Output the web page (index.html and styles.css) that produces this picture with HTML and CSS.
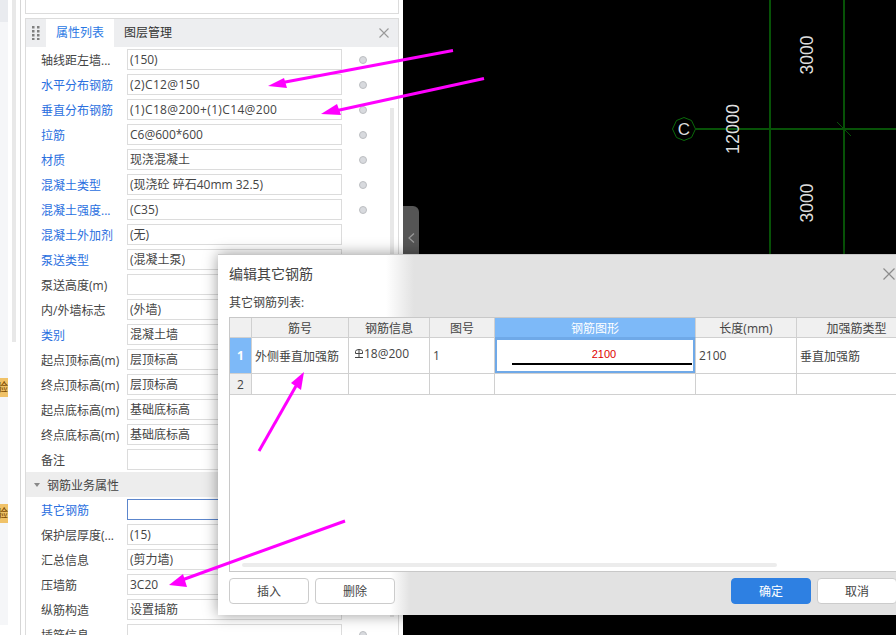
FILE: index.html
```html
<!DOCTYPE html>
<html lang="zh-CN">
<head>
  <meta charset="UTF-8" />
  <title>编辑其它钢筋</title>
  <link rel="stylesheet" href="styles.css">
</head>
<body>
  <div class="app">
    <div class="nav">
      <div class="nav-top"></div>
      <div class="nav-badge first">验</div>
      <div class="nav-badge second">验</div>
    </div>
    <div class="rail"><div class="rail-thumb"></div></div>
    <div class="rail-line"></div>

    <div class="panels">
      <div class="panel-top"></div>
      <div class="panel">
        <div class="tabs">
          <div class="grip">
            <svg width="8" height="14" viewBox="0 0 8 14"><path fill="#808080" d="M0 0h2.500v2.500H0zM5 0h2.500v2.500H5zM0 4h2.500v2.500H0zM5 4h2.500v2.500H5zM0 8h2.500v2.500H0zM5 8h2.500v2.500H5zM0 12h2.500v2H0zM5 12h2.500v2H5z"/></svg>
          </div>
          <div class="tab active">属性列表</div>
          <div class="tab">图层管理</div>
          <svg class="tab-close" width="10" height="10" viewBox="0 0 10 10"><path stroke="#999" stroke-width="1.100" d="M.5.500l9 9M9.500.500l-9 9"/></svg>
        </div>

        <div class="row"><span class="label">轴线距左墙...</span><span class="field">(150)</span><i class="dot"></i></div>
        <div class="row"><span class="label link">水平分布钢筋</span><span class="field spaced">(2)C12@150</span><i class="dot"></i></div>
        <div class="row"><span class="label link">垂直分布钢筋</span><span class="field spaced">(1)C18@200+(1)C14@200</span><i class="dot"></i></div>
        <div class="row"><span class="label link">拉筋</span><span class="field">C6@600*600</span><i class="dot"></i></div>
        <div class="row"><span class="label link">材质</span><span class="field">现浇混凝土</span><i class="dot"></i></div>
        <div class="row"><span class="label link">混凝土类型</span><span class="field">(现浇砼 碎石40mm 32.5)</span><i class="dot"></i></div>
        <div class="row"><span class="label link">混凝土强度...</span><span class="field">(C35)</span><i class="dot"></i></div>
        <div class="row"><span class="label link">混凝土外加剂</span><span class="field">(无)</span></div>
        <div class="row"><span class="label link">泵送类型</span><span class="field">(混凝土泵)</span></div>
        <div class="row"><span class="label">泵送高度(m)</span><span class="field"></span></div>
        <div class="row"><span class="label">内/外墙标志</span><span class="field">(外墙)</span></div>
        <div class="row"><span class="label link">类别</span><span class="field">混凝土墙</span></div>
        <div class="row"><span class="label">起点顶标高(m)</span><span class="field">层顶标高</span></div>
        <div class="row"><span class="label">终点顶标高(m)</span><span class="field">层顶标高</span></div>
        <div class="row"><span class="label">起点底标高(m)</span><span class="field">基础底标高</span></div>
        <div class="row"><span class="label">终点底标高(m)</span><span class="field">基础底标高</span></div>
        <div class="row"><span class="label">备注</span><span class="field"></span></div>

        <div class="section"><i class="caret"></i>钢筋业务属性</div>

        <div class="row"><span class="label link">其它钢筋</span><span class="field focus"></span></div>
        <div class="row"><span class="label">保护层厚度(...</span><span class="field">(15)</span></div>
        <div class="row"><span class="label">汇总信息</span><span class="field">(剪力墙)</span></div>
        <div class="row"><span class="label">压墙筋</span><span class="field">3C20</span></div>
        <div class="row"><span class="label">纵筋构造</span><span class="field">设置插筋</span></div>
        <div class="row"><span class="label">插筋信息</span><span class="field"></span><i class="dot"></i></div>

        <div class="panel-scroll"></div>
      </div>
    </div>

    <div class="canvas">
      <svg class="drawing" width="493" height="254" viewBox="403 0 493 254">
        <g stroke="#075207" fill="none">
          <path stroke-width="2" d="M770 0V254M844 0V254"/>
          <path stroke-width="2" d="M696 129H896"/>
          <path stroke-width="1" d="M837 122L851 136"/>
          <path stroke-width="1" stroke="#0a6a0a" d="M684 117.500l7.500 3 4 8.500-4 8.500-7.500 3-7.500-3-4-8.500 4-8.500z"/>
        </g>
        <g fill="#dedede" font-family="Liberation Sans, sans-serif" font-size="17.500">
          <text x="684" y="135" font-size="17" text-anchor="middle">C</text>
          <text transform="translate(739 129) rotate(-90)" text-anchor="middle" font-size="18">12000</text>
          <text transform="translate(813 55) rotate(-90)" text-anchor="middle">3000</text>
          <text transform="translate(813 203) rotate(-90)" text-anchor="middle">3000</text>
        </g>
      </svg>
      <div class="collapse">
        <svg width="7" height="10" viewBox="0 0 7 10"><path fill="none" stroke="#9a9a9a" stroke-width="1.200" d="M6 .500L1 5l5 4.500"/></svg>
      </div>
    </div>
  </div>

  <div class="dialog">
    <div class="dialog-head">
      <div class="dialog-title">编辑其它钢筋</div>
      <div class="dialog-sub">其它钢筋列表:</div>
      <svg class="dialog-close" width="12" height="12" viewBox="0 0 12 12"><path stroke="#8c8c8c" stroke-width="1.200" d="M.5.500l11 11M11.500.500l-11 11"/></svg>
    </div>

    <div class="grid-wrap">
      <table class="grid">
        <colgroup>
          <col class="c-index"><col class="c-name"><col class="c-info"><col class="c-fig"><col class="c-shape"><col class="c-len"><col class="c-type">
        </colgroup>
        <thead>
          <tr><th></th><th>筋号</th><th>钢筋信息</th><th>图号</th><th class="current">钢筋图形</th><th>长度(mm)</th><th>加强筋类型</th></tr>
        </thead>
        <tbody>
          <tr class="row-main">
            <td class="idx on">1</td>
            <td>外侧垂直加强筋</td>
            <td class="bar-info">
              <svg width="8" height="9" viewBox="0 0 8 9"><path fill="none" stroke="#444" d="M.5 4.500V2.500Q.5.500 4 .5T7.500 2.500V4.500H.5M4 0V8.500M0 8.500H8"/></svg>18@200
            </td>
            <td>1</td>
            <td class="shape-cell">
              <div class="shape-num">2100</div>
              <div class="shape-bar"></div>
            </td>
            <td>2100</td>
            <td>垂直加强筋</td>
          </tr>
          <tr class="row-empty">
            <td class="idx">2</td><td></td><td></td><td></td><td></td><td></td><td></td>
          </tr>
        </tbody>
      </table>
      <div class="grid-scroll"></div>
    </div>

    <div class="dialog-foot">
      <button class="btn">插入</button>
      <button class="btn">删除</button>
      <button class="btn primary push">确定</button>
      <button class="btn last">取消</button>
    </div>
  </div>

  <!-- annotation arrows on top of everything -->
  <svg class="marks" width="896" height="635" viewBox="0 0 896 635">
    <g stroke="#ff00ff" stroke-width="3" fill="#ff00ff">
      <path d="M453 50.500L280 83"/>
      <path d="M484 78.500L335 111"/>
      <path d="M345 521L182 580"/>
      <path d="M259 451L296 386"/>
    </g>
    <g fill="#ff00ff">
      <path d="M268 86L284 78 287 88z"/>
      <path d="M321 114L337 104 341 115z"/>
      <path d="M169 585L183 574 187 587z"/>
      <path d="M304 372L291 383 301 390z"/>
    </g>
  </svg>
</body>
</html>
```

FILE: styles.css
```css
/* page frame */
body {
  margin: 0;
  width: 896px;
  height: 635px;
  overflow: hidden;
  position: relative;
  background-color: #fff;
  font-family: "Open Sans", "Noto Sans CJK SC", sans-serif;
  font-size: 12px;
  color: #444;
}
.app {
  display: flex;
  height: 635px;
}

/* far left strip */
.nav {
  width: 8px;
  height: 625px;
  background-color: #f5f6f8;
  overflow: hidden;
}
.nav-top {
  height: 22px;
  background-color: #e9ebef;
}
.nav-badge {
  width: 8px;
  height: 19px;
  background-color: #f0c268;
  color: #7a4a00;
  font-size: 12px;
  line-height: 19px;
  text-indent: -4px;
  overflow: hidden;
  white-space: nowrap;
}
.nav-badge.first {
  margin-top: 356px;
}
.nav-badge.second {
  margin-top: 107px;
}
.rail {
  width: 12px;
  padding-left: 4px;
  box-sizing: border-box;
}
.rail-thumb {
  width: 4px;
  height: 342px;
  background-color: #e8e8e8;
}
.rail-line {
  width: 1px;
  margin-right: 4px;
  background-color: #d6d6d6;
}

/* property panel */
.panels {
  width: 374px;
  margin-right: 4px;
  flex-shrink: 0;
}
.panel-top {
  height: 13px;
  border: 1px solid #dcdcdc;
  border-top: 0;
  margin-bottom: 4px;
}
.panel {
  position: relative;
  border: 1px solid #dcdcdc;
  border-bottom: 0;
}
.tabs {
  display: flex;
  align-items: center;
  height: 28px;
  background-color: #edeef0;
}
.grip {
  width: 20px;
  display: flex;
  justify-content: center;
}
.tab {
  height: 28px;
  line-height: 28px;
  padding: 0 10px;
  color: #333;
}
.tab.active {
  background-color: #fff;
  color: #2a78e4;
}
.tab-close {
  margin-left: auto;
  margin-right: 9px;
}
.row {
  display: flex;
  align-items: center;
  height: 25px;
}
.label {
  width: 86px;
  padding-left: 15px;
  white-space: nowrap;
  color: #444;
  flex-shrink: 0;
}
.label.link {
  color: #2a6fe0;
}
.field {
  box-sizing: border-box;
  width: 215px;
  height: 21px;
  line-height: 19px;
  padding: 0 2px;
  border: 1px solid #dcdcdc;
  color: #444;
  flex-shrink: 0;
}
.field.spaced {
  letter-spacing: 0.35px;
}
.field.focus {
  border-color: #5c86cc;
}
.dot {
  box-sizing: border-box;
  width: 8px;
  height: 8px;
  margin-left: 17px;
  border: 1px solid #bcbec2;
  border-radius: 50%;
  background-color: #d8dade;
}
.section {
  display: flex;
  align-items: center;
  height: 25px;
  background-color: #ededed;
  padding-left: 8px;
  color: #444;
}
.caret {
  width: 0;
  height: 0;
  margin-right: 7px;
  border-left: 3.500px solid transparent;
  border-right: 3.500px solid transparent;
  border-top: 4px solid #888;
}
.panel-scroll {
  position: absolute;
  left: 364px;
  top: 89px;
  bottom: 30px;
  width: 4px;
  background-color: #e8e8e8;
}

/* black drawing area */
.canvas {
  position: relative;
  flex: 1;
  background-color: #000;
}
.drawing {
  display: block;
}
.collapse {
  position: absolute;
  left: 0;
  top: 206px;
  width: 16px;
  height: 48px;
  background-color: #555;
  border-radius: 0 6px 0 0;
  display: flex;
  align-items: center;
  justify-content: center;
  padding-top: 16px;
  box-sizing: border-box;
}

/* edit dialog */
.dialog {
  position: absolute;
  left: 218px;
  top: 254px;
  width: 678px;
  height: 361px;
  box-sizing: border-box;
  border-top: 1px solid #c8c8c8;
  background-color: #fff;
  box-shadow: 0 0 14px rgba(0, 0, 0, 0.4);
}
.dialog-head {
  position: relative;
  height: 62px;
  box-sizing: border-box;
  padding: 9px 11px 0;
  background: linear-gradient(to right, #fff 168px, #e2e2e2 196px);
}
.dialog-title {
  font-size: 14px;
  line-height: 19px;
  color: #444;
}
.dialog-sub {
  margin-top: 11px;
  line-height: 18px;
  color: #444;
}
.dialog-close {
  position: absolute;
  right: 1px;
  top: 13px;
}
.grid-wrap {
  position: relative;
  margin-left: 11px;
  height: 255px;
  box-sizing: border-box;
  border: 1px solid #c8c8c8;
  border-right: 0;
  background-color: #fff;
  overflow: hidden;
}
.grid {
  table-layout: fixed;
  width: 687px;
  border-collapse: separate;
  border-spacing: 0;
}
.c-index { width: 22px; }
.c-name { width: 97px; }
.c-info { width: 81px; }
.c-fig { width: 65px; }
.c-shape { width: 201px; }
.c-len { width: 101px; }
.c-type { width: 120px; }
.grid th,
.grid td {
  box-sizing: border-box;
  padding: 0 3px;
  border-right: 1px solid #d0d0d0;
  border-bottom: 1px solid #d0d0d0;
  overflow: hidden;
  white-space: nowrap;
  color: #444;
}
.grid th {
  height: 20px;
  background-color: #f0f0f0;
  font-weight: normal;
  text-align: center;
}
.grid th.current {
  background-color: #7db9f8;
  color: #fff;
  border-bottom-color: #6fa9e8;
}
.row-main td {
  height: 36px;
}
.row-empty td {
  height: 21px;
}
.grid td.idx {
  background-color: #f0f0f0;
  text-align: center;
  padding: 0;
}
.grid td.idx.on {
  background-color: #7db9f8;
  color: #fff;
  font-weight: bold;
}
.bar-info svg {
  margin: 0 1px 3px 4px;
  vertical-align: middle;
}
.grid td.bar-info {
  padding: 0 2px 4px;
}
.grid td.shape-cell {
  padding: 0 4px 0 17px;
  box-shadow: inset 0 0 0 2px #6fa9e8;
}
.shape-num {
  width: 184px;
  text-align: center;
  font-family: "Liberation Sans", sans-serif;
  font-size: 11px;
  line-height: 15px;
  color: #e00000;
}
.shape-bar {
  width: 180px;
  height: 2px;
  margin-top: 1px;
  background-color: #000;
}
.grid-scroll {
  position: absolute;
  left: 12px;
  top: 245px;
  width: 535px;
  height: 4px;
  border-radius: 2px;
  background-color: #ececec;
}
.dialog-foot {
  display: flex;
  height: 43px;
  box-sizing: border-box;
  padding: 6px 0 0 11px;
  gap: 6px;
  background: linear-gradient(to right, #fff 172px, #e2e2e2 192px);
}
.btn {
  width: 80px;
  height: 26px;
  padding: 0;
  border: 1px solid #ccc;
  border-radius: 4px;
  background-color: #fff;
  font-family: inherit;
  font-size: 12px;
  color: #444;
}
.btn.primary {
  border-color: #2e80e2;
  background-color: #2e80e2;
  color: #fff;
}
.btn.push {
  margin-left: auto;
}
.btn.last {
  margin-right: -1px;
}

/* arrows layer */
.marks {
  position: absolute;
  left: 0;
  top: 0;
  pointer-events: none;
}
```
